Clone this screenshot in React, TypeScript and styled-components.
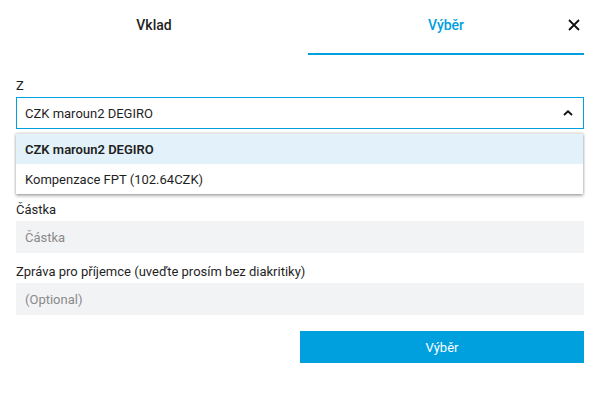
import styled, { createGlobalStyle } from "styled-components";
import { useState } from "react";

const GlobalStyle = createGlobalStyle`
  body {
    margin: 0;
    background: #ffffff;
    font-family: Roboto, "Liberation Sans", sans-serif;
    color: #1f1f1f;
  }
  * {
    box-sizing: border-box;
  }
`;

const Dialog = styled.div`
  position: relative;
  width: 599px;
  padding: 0 15px 0 16px;
`;

const Tabs = styled.div`
  display: grid;
  grid-template-columns: 1fr 1fr;
  gap: 16px;
`;

interface TabProps {
  active?: boolean;
}
const Tab = styled.button<TabProps>`
  height: 55px;
  padding: 0 0 4px;
  border: 0;
  border-bottom: 2px solid ${(props) => (props.active ? "#00a0df" : "transparent")};
  background: none;
  font-family: inherit;
  font-size: 14px;
  font-weight: 500;
  color: ${(props) => (props.active ? "#00a0df" : "#1f1f1f")};
  cursor: pointer;
`;

const CloseBtn = styled.button`
  position: absolute;
  top: 17px;
  right: 17px;
  width: 16px;
  height: 16px;
  padding: 0;
  border: 0;
  background: none;
  display: flex;
  align-items: center;
  justify-content: center;
  cursor: pointer;
`;

const Form = styled.div`
  display: flex;
  flex-direction: column;
  gap: 11px;
  padding-top: 23px;
`;

interface FieldProps {
  menuOpen?: boolean;
}
const Field = styled.div<FieldProps>`
  position: relative;
  display: flex;
  flex-direction: column;
  margin-bottom: ${(props) => (props.menuOpen ? "62px" : "0")};
`;

const Label = styled.label`
  font-size: 13px;
  line-height: 16px;
  margin-bottom: 3px;
  color: #1f1f1f;
`;

const SelectBox = styled.div`
  height: 32px;
  border: 1px solid #00a0df;
  display: flex;
  align-items: center;
  justify-content: space-between;
  padding: 0 10px 0 8px;
  font-size: 13px;
  cursor: pointer;
`;

const Menu = styled.ul`
  position: absolute;
  top: 55px;
  left: 0;
  right: 1px;
  margin: 0;
  padding: 0;
  list-style: none;
  background: #ffffff;
  border-top: 1px solid #e4e4e4;
  box-shadow: 0 2px 3px rgba(0, 0, 0, 0.3), 1px 0 2px rgba(0, 0, 0, 0.12),
    -1px 0 2px rgba(0, 0, 0, 0.08);
  z-index: 2;
`;

interface OptionProps {
  selected?: boolean;
}
const Option = styled.li<OptionProps>`
  height: 30px;
  display: flex;
  align-items: center;
  padding: 0 9px;
  font-size: 13px;
  font-weight: ${(props) => (props.selected ? 600 : 400)};
  background: ${(props) => (props.selected ? "#e3f2fa" : "#ffffff")};
  cursor: pointer;
`;

const Input = styled.input`
  height: 32px;
  border: 0;
  background: #f2f3f5;
  padding: 0 9px;
  font-family: inherit;
  font-size: 13px;
  color: #1f1f1f;
  outline: none;
  &::placeholder {
    color: #8a8a8a;
  }
`;

const Actions = styled.div`
  display: flex;
  justify-content: flex-end;
  padding-top: 16px;
`;

const SubmitBtn = styled.button`
  width: 284px;
  height: 32px;
  border: 0;
  background: #00a0df;
  color: #ffffff;
  font-family: inherit;
  font-size: 13px;
  font-weight: 400;
  cursor: pointer;
`;

const accounts = ["CZK maroun2 DEGIRO", "Kompenzace FPT (102.64CZK)"];

export default function App() {
  const [tab, setTab] = useState<"vklad" | "vyber">("vyber");
  const [account, setAccount] = useState(accounts[0]);
  const [open, setOpen] = useState(true);

  return (
    <>
      <GlobalStyle />
      <Dialog>
        <Tabs>
          <Tab active={tab === "vklad"} onClick={() => setTab("vklad")}>
            Vklad
          </Tab>
          <Tab active={tab === "vyber"} onClick={() => setTab("vyber")}>
            Výběr
          </Tab>
        </Tabs>
        <CloseBtn aria-label="Zavřít">
          <svg width="12" height="12" viewBox="0 0 12 12">
            <path d="M1 1L11 11M11 1L1 11" stroke="#111" strokeWidth="1.8" />
          </svg>
        </CloseBtn>

        <Form>
          <Field menuOpen={open}>
            <Label>Z</Label>
            <SelectBox onClick={() => setOpen(!open)}>
              <span>{account}</span>
              <svg width="10" height="6" viewBox="0 0 10 6">
                <path
                  d="M1 5L5 1.3L9 5"
                  stroke="#111"
                  strokeWidth="1.8"
                  fill="none"
                />
              </svg>
            </SelectBox>
            {open && (
              <Menu>
                {accounts.map((a) => (
                  <Option
                    key={a}
                    selected={a === account}
                    onClick={() => {
                      setAccount(a);
                      setOpen(false);
                    }}
                  >
                    {a}
                  </Option>
                ))}
              </Menu>
            )}
          </Field>
          <Field>
            <Label>Částka</Label>
            <Input placeholder="Částka" />
          </Field>
          <Field>
            <Label>Zpráva pro příjemce (uveďte prosím bez diakritiky)</Label>
            <Input placeholder="(Optional)" />
          </Field>
        </Form>

        <Actions>
          <SubmitBtn>Výběr</SubmitBtn>
        </Actions>
      </Dialog>
    </>
  );
}
